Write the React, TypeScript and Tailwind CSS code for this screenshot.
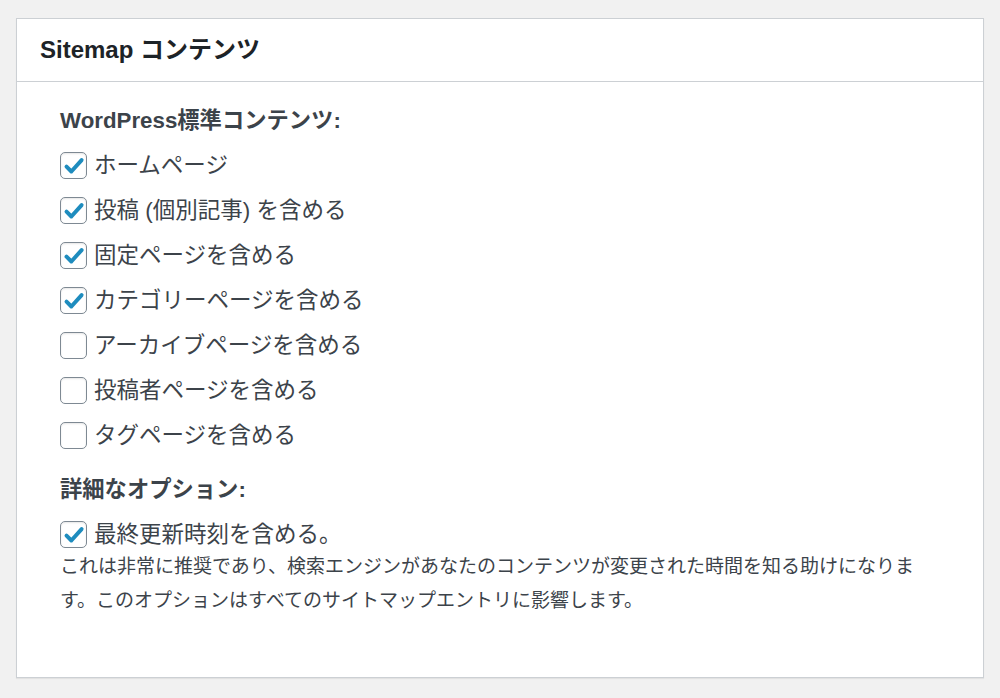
import React from "react";

const font = { fontFamily: '"Liberation Sans", "Noto Sans CJK JP", sans-serif' };

function Check({ checked }: { checked: boolean }) {
  return (
    <span className="flex h-[27px] w-[27px] shrink-0 items-center justify-center rounded-[5px] border-[1.5px] border-[#7e8993] bg-white shadow-[inset_0_1px_2px_rgba(0,0,0,0.1)]">
      {checked && (
        <svg width="22" height="22" viewBox="0 0 20 20">
          <path d="M3.2 10.6 L7.6 15 L16.9 4.6" fill="none" stroke="#1e8cbe" strokeWidth="3.6" strokeLinecap="round" strokeLinejoin="round" />
        </svg>
      )}
    </span>
  );
}

function Row({ checked, label }: { checked: boolean; label: string }) {
  return (
    <div className="flex h-[45px] items-center gap-[7px]">
      <Check checked={checked} />
      <span className="text-[22.5px] leading-[30px] text-[#3c434a]">{label}</span>
    </div>
  );
}

export default function App() {
  const items: [boolean, string][] = [
    [true, "ホームページ"],
    [true, "投稿 (個別記事) を含める"],
    [true, "固定ページを含める"],
    [true, "カテゴリーページを含める"],
    [false, "アーカイブページを含める"],
    [false, "投稿者ページを含める"],
    [false, "タグページを含める"],
  ];
  return (
    <div className="h-[698px] w-[1000px] overflow-hidden bg-[#f1f1f1] pl-[16px] pt-[18px]" style={font}>
      <div className="h-[660px] w-[968px] border border-[#ccd0d4] bg-white shadow-[0_1px_1px_rgba(0,0,0,0.06)]">
        <div className="flex h-[63px] items-center border-b border-[#ccd0d4] pl-[23px]">
          <h2 className="text-[24px] font-bold leading-[30px] text-[#1d2327]">Sitemap コンテンツ</h2>
        </div>
        <div className="pl-[43px] pt-[24px]">
          <div className="h-[30px] text-[22.3px] font-bold leading-[30px] text-[#3c434a]">WordPress標準コンテンツ:</div>
          <div className="mt-[7px]">
            {items.map(([c, l]) => (
              <Row key={l} checked={c} label={l} />
            ))}
          </div>
          <div className="mt-[17px] h-[30px] text-[22.3px] font-bold leading-[30px] text-[#3c434a]">詳細なオプション:</div>
          <div className="mt-[7px]">
            <Row checked={true} label="最終更新時刻を含める。" />
          </div>
          <p className="-mt-[7px] max-w-[862px] text-[19px] leading-[34px] text-[#3c434a]">
            これは非常に推奨であり、検索エンジンがあなたのコンテンツが変更された時間を知る助けになります。このオプションはすべてのサイトマップエントリに影響します。
          </p>
        </div>
      </div>
    </div>
  );
}
